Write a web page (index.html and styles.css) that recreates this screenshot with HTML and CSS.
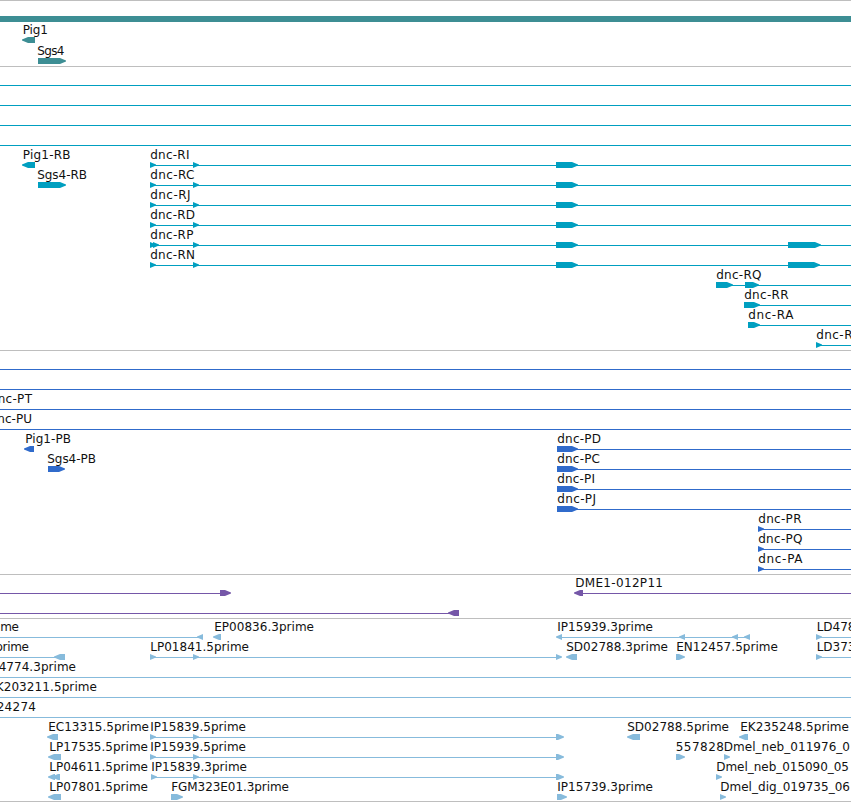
FILE: index.html
```
<!DOCTYPE html>
<html lang="en">

<head>
  <meta charset="UTF-8">
  <meta name="viewport" content="width=device-width, initial-scale=1.0">
  <title>Genome Browser</title>
  <link rel="stylesheet" href="styles.css">
</head>

<body>
  <main class="browser" id="browser"></main>
  <script src="script.js"></script>
</body>

</html>
```
FILE: styles.css
```
body {
  margin: 0;
  background-color: #fff;
  font-family: "DejaVu Sans", Verdana, sans-serif;
  font-size: 12px;
  overflow: hidden;
}

.browser {
  display: flex;
  flex-direction: column;
  width: 851px;
  border-bottom: 1px solid #bebebe;
}

.track {
  display: block;
  width: 851px;
  border-top: 1px solid #bebebe;
  overflow: hidden;
}

.shape {
  fill: currentColor;
  shape-rendering: crispEdges;
}

.arrow {
  fill: currentColor;
}

.label {
  fill: #111;
}

.gene {
  color: #3d8e94;
}

.transcript {
  color: #009fc0;
}

.protein {
  color: #306bcb;
}

.bac {
  color: #7557a8;
}

.est {
  color: #87bbdc;
}
```
FILE: script.js
```
const SVG_NS = 'http://www.w3.org/2000/svg';
const END = 851;

// labels: [text, start, end], lines: [start, end]
// right / left: arrows as [start, end], bars: [start, end]
const threeExons = [[150, 156], [193, 199], [556, 578]];
const estExons = [[150, 156], [193, 199], [556, 564]];

const tracks = [
  {
    type: 'gene', height: 65, pitch: 21,
    rows: [
      { bars: [[0, END]] },
      { labels: [['Pig1', 23, 47.5]], left: [[22, 35]] },
      { labels: [['Sgs4', 37.5, 64]], right: [[38, 66]] }
    ]
  },
  {
    type: 'transcript', height: 283, pitch: 20,
    rows: [
      { lines: [[0, END]] },
      { lines: [[0, END]] },
      { lines: [[0, END]] },
      { lines: [[0, END]] },
      { labels: [['Pig1-RB', 23, 70], ['dnc-RI', 150.5, 189]], lines: [[150, END]], left: [[22, 35]], right: threeExons },
      { labels: [['Sgs4-RB', 37.5, 86.5], ['dnc-RC', 150.5, 194]], lines: [[150, END]], right: [[38, 66], ...threeExons] },
      { labels: [['dnc-RJ', 150.5, 190]], lines: [[150, END]], right: threeExons },
      { labels: [['dnc-RD', 150.5, 194.5]], lines: [[150, END]], right: threeExons },
      { labels: [['dnc-RP', 150.5, 193]], lines: [[150, END]], right: [...threeExons, [153, 159], [788, 821]] },
      { labels: [['dnc-RN', 150.5, 194.5]], lines: [[150, END]], right: [...threeExons, [788, 820]] },
      { labels: [['dnc-RQ', 716.5, 761]], lines: [[716, END]], right: [[716, 733], [745, 759]] },
      { labels: [['dnc-RR', 744.5, 788]], lines: [[744, END]], right: [[744, 760]] },
      { labels: [['dnc-RA', 748.5, 793]], lines: [[748, END]], right: [[748, 760]] },
      { labels: [['dnc-R', 816.5, 852]], lines: [[816, END]], right: [[816, 822]] }
    ]
  },
  {
    type: 'protein', height: 223, pitch: 20,
    rows: [
      { lines: [[0, END]] },
      { lines: [[0, END]] },
      { labels: [['dnc-PT', -10, 31.5]], lines: [[0, END]] },
      { labels: [['dnc-PU', -10, 31.5]], lines: [[0, END]] },
      { labels: [['Pig1-PB', 25.5, 70.5], ['dnc-PD', 557.5, 600.5]], lines: [[557, END]], left: [[24, 34]], right: [[557, 578]] },
      { labels: [['Sgs4-PB', 47.5, 95.5], ['dnc-PC', 557.5, 599.5]], lines: [[557, END]], right: [[48, 65], [557, 578]] },
      { labels: [['dnc-PI', 557.5, 594.5]], lines: [[557, END]], right: [[557, 578]] },
      { labels: [['dnc-PJ', 557.5, 595.5]], lines: [[557, END]], right: [[557, 578]] },
      { labels: [['dnc-PR', 758.5, 801]], lines: [[758, END]], right: [[758, 764]] },
      { labels: [['dnc-PQ', 758.5, 802]], lines: [[758, END]], right: [[758, 764]] },
      { labels: [['dnc-PA', 758.5, 802]], lines: [[758, END]], right: [[758, 764]] }
    ]
  },
  {
    type: 'bac', height: 43, pitch: 20,
    rows: [
      { labels: [['DME1-012P11', 575.5, 662.5]], lines: [[0, 220], [575, END]], left: [[574, 583]], right: [[220, 231]] },
      { lines: [[0, 450]], left: [[448, 459]] }
    ]
  },
  {
    type: 'est', height: 182, pitch: 20,
    rows: [
      {
        labels: [['prime', -14.5, 18.5], ['EP00836.3prime', 214.5, 313.5], ['IP15939.3prime', 557.5, 652.5], ['LD478', 817, 855]],
        lines: [[0, 198], [560, 746], [816, END]],
        left: [[197, 203], [213, 221], [556, 562], [679, 685], [732, 738], [744, 750]],
        right: [[816, 822]]
      },
      {
        labels: [['prime', -4.5, 28.5], ['LP01841.5prime', 150.5, 248.5], ['SD02788.3prime', 566.5, 667.5], ['EN12457.5prime', 676.5, 777.5], ['LD373', 817, 855]],
        lines: [[0, 56], [150, 556], [816, END]],
        left: [[54, 65], [566, 577]],
        right: [[150, 156], [193, 199], [556, 562], [676, 685], [816, 822]]
      },
      { labels: [['4774.3prime', -1, 75.5]], lines: [[0, END]] },
      { labels: [['K203211.5prime', -4, 96.5]], lines: [[0, END]] },
      { labels: [['24274', -3, 35.5]], lines: [[0, END]] },
      {
        labels: [['EC13315.5prime', 48.5, 148.5], ['IP15839.5prime', 150.5, 245.5], ['SD02788.5prime', 627.5, 728.5], ['EK235248.5prime', 740.5, 848.5]],
        lines: [[150, 560]],
        left: [[47, 58], [627, 640], [739, 748]],
        right: estExons
      },
      {
        labels: [['LP17535.5prime', 49.5, 147.5], ['IP15939.5prime', 150.5, 245.5], ['557828', 676, 723.5], ['Dmel_neb_011976_0', 724, 849.5]],
        lines: [[150, 560]],
        left: [[48, 61]],
        right: [...estExons, [676, 685], [724, 730]]
      },
      {
        labels: [['LP04611.5prime', 49.5, 147.5], ['IP15839.3prime', 151.5, 246.5], ['Dmel_neb_015090_05', 716.5, 848.5]],
        lines: [[151, 560]],
        left: [[48, 55], [52, 60]],
        right: [[151, 157], [193, 199], [556, 564], [716, 722]]
      },
      {
        labels: [['LP07801.5prime', 49.5, 147.5], ['FGM323E01.3prime', 171.5, 288.5], ['IP15739.3prime', 557.5, 652.5], ['Dmel_dig_019735_06', 720.5, 849.5]],
        left: [[48, 61]],
        right: [[171, 183], [557, 567], [720, 726]]
      }
    ]
  }
];

function add(parent, name, attrs) {
  const el = document.createElementNS(SVG_NS, name);
  for (const key in attrs) {
    el.setAttribute(key, attrs[key]);
  }
  parent.appendChild(el);
  return el;
}

function drawArrow(svg, tail, tip, y) {
  // the head takes the last 6px of the feature
  const dir = tip > tail ? 1 : -1;
  const neck = tip - dir * 6;
  const points = [[tail, y - 3], [neck, y - 3], [tip, y - 0.5], [tip, y + 0.5], [neck, y + 3], [tail, y + 3]];
  add(svg, 'polygon', { class: 'arrow', points: points.join(' ') });
}

function drawRow(svg, row, y) {
  (row.lines || []).forEach(([a, b]) => add(svg, 'rect', { class: 'shape', x: a, y: y, width: b - a, height: 1 }));
  (row.bars || []).forEach(([a, b]) => add(svg, 'rect', { class: 'shape', x: a, y: y - 3, width: b - a, height: 6 }));
  (row.right || []).forEach(([a, b]) => drawArrow(svg, a, b, y));
  (row.left || []).forEach(([a, b]) => drawArrow(svg, b, a, y));
  (row.labels || []).forEach(([text, a, b]) => {
    const label = add(svg, 'text', { class: 'label', x: a - 0.3, y: y - 6, textLength: b - a + 0.8 });
    label.textContent = text;
  });
}

const browser = document.getElementById('browser');

tracks.forEach(track => {
  const svg = add(browser, 'svg', { class: 'track ' + track.type, width: END, height: track.height });
  track.rows.forEach((row, i) => drawRow(svg, row, 18 + i * track.pitch));
});
```
